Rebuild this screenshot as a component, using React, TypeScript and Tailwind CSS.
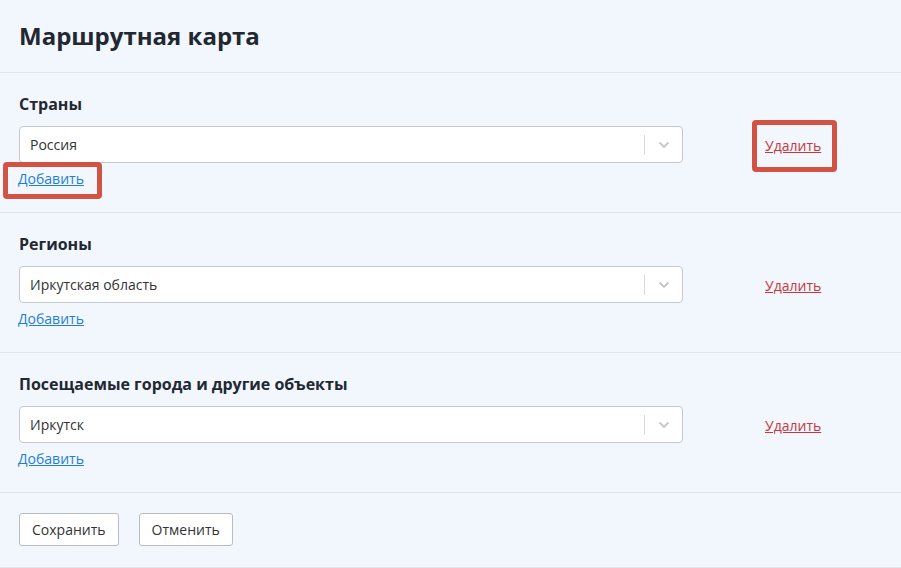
export default function App() {
  const sections = [
    { label: 'Страны', value: 'Россия', mark: true },
    { label: 'Регионы', value: 'Иркутская область', mark: false },
    { label: 'Посещаемые города и другие объекты', value: 'Иркутск', mark: false },
  ]

  return (
    <div className="min-h-[568px] bg-[#f2f6fd] text-[#222831]" style={{ fontFamily: '"Open Sans", sans-serif' }}>
      <header className="h-[73px] border-b border-[#e1e5ea] px-[19px] flex items-center">
        <h1 className="text-[24px] font-bold leading-8 -mt-[1px]">Маршрутная карта</h1>
      </header>

      {sections.map((s) => (
        <section key={s.label} className="h-[140px] border-b border-[#e1e5ea] px-[19px] pt-[20px]">
          <h2 className="text-[16px] font-bold leading-[22px]">{s.label}</h2>
          <div className="mt-[11px] flex items-center">
            <div className="w-[664px] h-[37px] bg-white border border-[#c5c8cd] rounded-[4px] flex items-center">
              <span className="flex-1 pl-[10px] text-[14px] text-[#333]">{s.value}</span>
              <span className="w-px h-[20px] bg-[#d6d8dc]" />
              <span className="w-[37px] flex items-center justify-center">
                <svg width="12" height="8" viewBox="0 0 12 8" fill="none">
                  <path d="M1.5 1.5 6 6l4.5-4.5" stroke="#c4c6ca" strokeWidth="1.8" />
                </svg>
              </span>
            </div>
            <div className="ml-[82px] relative">
              <a href="#" className="text-[14px] text-[#c8383a] underline leading-5">Удалить</a>
              {s.mark && (
                <span className="absolute -left-[13px] -top-[13px] w-[85px] h-[52px] border-[5px] border-[#d25243] rounded-[4px]" />
              )}
            </div>
          </div>
          <div className="mt-[6px] relative w-fit">
            <a href="#" className="text-[14px] text-[#1f7fd1] underline leading-5 block -ml-[1px]">Добавить</a>
            {s.mark && (
              <span className="absolute -left-[16px] -top-[7px] w-[99px] h-[37px] border-[5px] border-[#d25243] rounded-[4px]" />
            )}
          </div>
        </section>
      ))}

      <div className="h-[75px] border-b border-[#e1e5ea] px-[19px] pt-[20px] flex gap-[20px] items-start">
        <button className="h-[33px] px-[12px] bg-white border border-[#b9bcc1] rounded-[3px] text-[14px] text-[#333]">Сохранить</button>
        <button className="h-[33px] px-[12px] bg-white border border-[#b9bcc1] rounded-[3px] text-[14px] text-[#333]">Отменить</button>
      </div>
    </div>
  )
}
